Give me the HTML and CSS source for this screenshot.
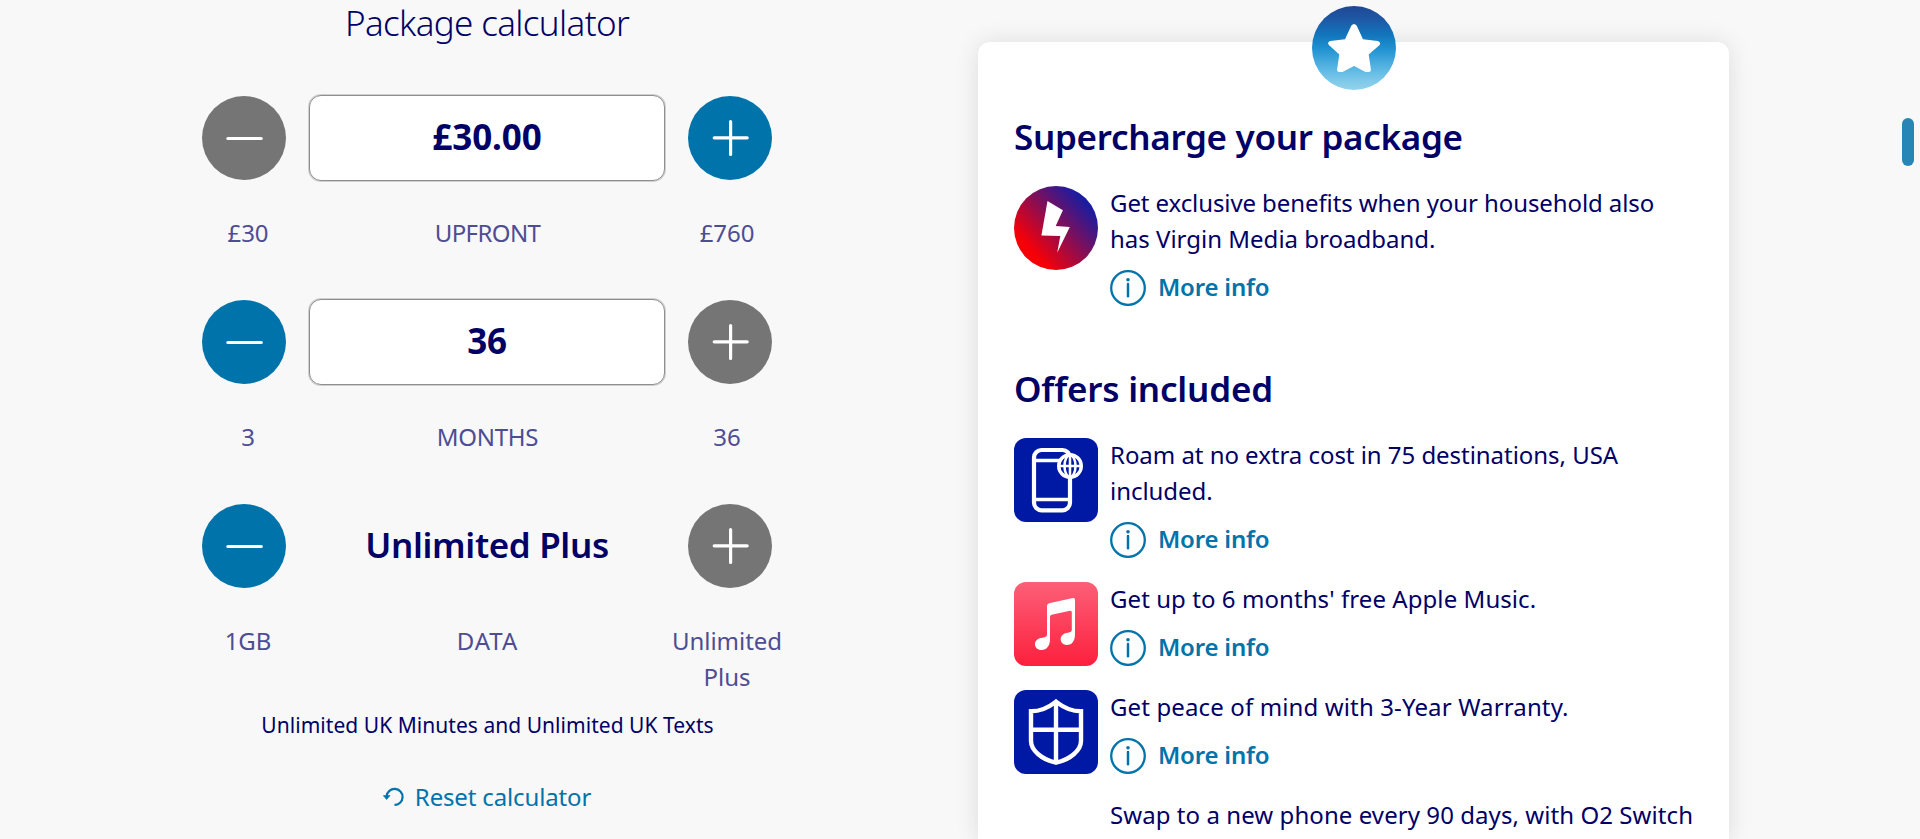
FILE: index.html
```
<!DOCTYPE html>
<html lang="en">
<head>
<meta charset="utf-8">
<title>Package calculator</title>
<link rel="stylesheet" href="styles.css">
</head>
<body>
<svg class="defs" width="0" height="0" aria-hidden="true">
  <symbol id="minus" viewBox="0 0 84 84"><path d="M25.8 42.5h33.500" fill="none" stroke="#fff" stroke-width="3" stroke-linecap="round"/></symbol>
  <symbol id="plus" viewBox="0 0 84 84"><path d="M42.6 25.5v33M26.2 41.8h33" fill="none" stroke="#fff" stroke-width="3.2" stroke-linecap="round"/></symbol>
  <symbol id="info" viewBox="0 0 36 36"><circle cx="18" cy="18" r="16.8" fill="none" stroke="#0073ab" stroke-width="2.3"/><circle cx="18" cy="9.8" r="1.8" fill="#0073ab"/><path d="M18 14v12.2" fill="none" stroke="#0073ab" stroke-width="2.5" stroke-linecap="round"/></symbol>
</svg>
<main class="page">
  <section class="calculator">
    <h1 class="calc-title">Package calculator</h1>

    <div class="control">
      <button class="round off" aria-label="Less upfront"><svg><use href="#minus"/></svg></button>
      <div class="value field money">£30.00</div>
      <button class="round" aria-label="More upfront"><svg><use href="#plus"/></svg></button>
    </div>
    <div class="labels"><span>£30</span><span class="caps">UPFRONT</span><span>£760</span></div>

    <div class="control">
      <button class="round" aria-label="Fewer months"><svg><use href="#minus"/></svg></button>
      <div class="value field">36</div>
      <button class="round off" aria-label="More months"><svg><use href="#plus"/></svg></button>
    </div>
    <div class="labels"><span>3</span><span class="caps months">MONTHS</span><span>36</span></div>

    <div class="control">
      <button class="round" aria-label="Less data"><svg><use href="#minus"/></svg></button>
      <div class="value plan">Unlimited Plus</div>
      <button class="round off" aria-label="More data"><svg><use href="#plus"/></svg></button>
    </div>
    <div class="labels last"><span>1GB</span><span class="caps data">DATA</span><span>Unlimited Plus</span></div>

    <p class="allowance">Unlimited UK Minutes and Unlimited UK Texts</p>
    <a class="reset">
      <svg class="reset-icon" viewBox="0 0 21 20"><path d="M3.6 9.2a8 8 0 1 1 7.9 8.7" fill="none" stroke="#0073ab" stroke-width="2.2"/><path d="M.3 8.6h6.800L3.6 12.600z" fill="#0073ab" stroke="#0073ab" stroke-width=".6" stroke-linejoin="round"/></svg>
      <span>Reset calculator</span>
    </a>
  </section>

  <section class="card">
    <svg class="star" viewBox="0 0 84 84">
      <defs><linearGradient id="sky" x1="0" y1="0" x2="0" y2="1"><stop offset="0" stop-color="#1f4795"/><stop offset=".18" stop-color="#1c5ba8"/><stop offset=".35" stop-color="#1277bd"/><stop offset=".5" stop-color="#1e90d0"/><stop offset=".7" stop-color="#4fb0e0"/><stop offset=".88" stop-color="#7cc8e9"/><stop offset="1" stop-color="#93d2ec"/></linearGradient></defs>
      <circle cx="42" cy="42" r="42" fill="url(#sky)"/>
      <path d="M39.4 19.6Q42 16.400 44.600 19.600L51 33.200L65.600 34.900Q69.400 36.200 67.600 39L56.700 48.500L58.900 63.500Q59 66.300 56 66L53.5 66L42 60L30.5 66L28 66Q25 66.300 25.100 63.500L27.300 48.500L16.900 39Q14.600 36.200 18.400 34.900L33 33.200Z" fill="#fff"/>
    </svg>

    <h2 class="card-title">Supercharge your package</h2>
    <div class="offer">
      <svg class="offer-icon" viewBox="0 0 84 84">
        <defs><linearGradient id="volt" x1=".2" y1=".8" x2=".86" y2=".2"><stop offset=".04" stop-color="#f50008"/><stop offset="1" stop-color="#1a1ca0"/></linearGradient></defs>
        <circle cx="42" cy="42" r="42" fill="url(#volt)"/>
        <path d="M33.500 15L48.900 24.300L41.700 40L55.800 41L43.200 66.800L46.300 50L27.400 49.500Z" fill="#fff"/>
      </svg>
      <div class="offer-body">
        <p class="lead">Get exclusive benefits when your household also<br><span class="close">has Virgin Media broadband.</span></p>
        <a class="more"><svg><use href="#info"/></svg><span>More info</span></a>
      </div>
    </div>

    <h2 class="card-title second">Offers included</h2>
    <div class="offer">
      <svg class="offer-icon" viewBox="0 0 84 84">
        <rect width="84" height="84" rx="12" fill="#0019a5"/>
        <g fill="none" stroke="#fff">
          <rect x="20" y="12" width="36" height="60.300" rx="7.500" stroke-width="4.200"/>
          <path d="M20 22.500h36M20 61.500h36" stroke-width="3.400"/>
        </g>
        <circle cx="56" cy="28" r="11.300" fill="#0019a5" stroke="#fff" stroke-width="3.400"/>
        <g fill="none" stroke="#fff" stroke-width="2.500"><path d="M56 17v22M45 28h22"/><ellipse cx="56" cy="28" rx="5.500" ry="11"/></g>
      </svg>
      <div class="offer-body">
        <p>Roam at no extra cost in 75 destinations, USA<br>included.</p>
        <a class="more"><svg><use href="#info"/></svg><span>More info</span></a>
      </div>
    </div>
    <div class="offer">
      <svg class="offer-icon" viewBox="0 0 84 84">
        <defs><linearGradient id="rose" x1="0" y1="0" x2="0" y2="1"><stop offset="0" stop-color="#fd5f78"/><stop offset="1" stop-color="#fc203d"/></linearGradient></defs>
        <rect width="84" height="84" rx="12" fill="url(#rose)"/>
        <path d="M33 24Q33 21.800 35 21.200L59 16Q61 15.700 61 17.800V52.500C61 58 58.600 63 52.800 63C49.300 63 46.700 60.500 46.700 57.300C46.700 54 49 51.800 52.400 51C56 50.200 57.800 50 57.800 47.500V30.200Q57.800 28.400 56 28.700L37.600 32.700Q36 33.100 36 34.800V57.500C36 63 33.200 68.100 27.300 68.100C23.700 68.100 21 65.600 21 62.300C21 59 23.400 56.900 26.800 56.100C30.500 55.200 33 55.200 33 52.500Z" fill="#fff"/>
      </svg>
      <div class="offer-body">
        <p class="loose">Get up to 6 months' free Apple Music.</p>
        <a class="more"><svg><use href="#info"/></svg><span>More info</span></a>
      </div>
    </div>
    <div class="offer">
      <svg class="offer-icon" viewBox="0 0 84 84">
        <rect width="84" height="84" rx="12" fill="#0019a5"/>
        <path d="M42 11.600C35 17.200 26.500 21.300 17 21.300V51C17 60.500 28 69.500 42 72.700C56 69.500 67 60.500 67 51V21.300C57.500 21.300 49 17.200 42 11.600ZM42 12V72M17 39.700H67" fill="none" stroke="#fff" stroke-width="4.400"/>
      </svg>
      <div class="offer-body">
        <p class="looser">Get peace of mind with 3-Year Warranty.</p>
        <a class="more"><svg><use href="#info"/></svg><span>More info</span></a>
      </div>
    </div>
    <div class="offer">
      <div class="offer-icon"></div>
      <div class="offer-body"><p class="loose">Swap to a new phone every 90 days, with O2 Switch</p></div>
    </div>
  </section>
</main>
<div class="scroll-thumb"></div>
</body>
</html>
```

FILE: styles.css
```
* { box-sizing: border-box; }

body {
  margin: 0;
  height: 839px;
  overflow: hidden;
  background: #f8f8f8;
  color: #000066;
  font: 24px/36px "Noto Sans", "Open Sans", sans-serif;
}

h1, h2, p { margin: 0; }

.defs { display: block; }

.page {
  display: flex;
  align-items: flex-start;
  height: 839px;
  overflow: hidden;
}

.calculator {
  width: 600px;
  margin-left: 187px;
}

.calc-title {
  height: 94px;
  font-size: 35px;
  font-weight: 300;
  line-height: 46px;
  letter-spacing: -0.65px;
  text-align: center;
}

.control {
  display: flex;
  align-items: center;
  justify-content: space-between;
  height: 88px;
  padding: 0 15px;
}

.round {
  width: 84px;
  height: 84px;
  padding: 0;
  border: 0;
  border-radius: 50%;
  background: #0073ab;
}

.round.off { background: #757575; }

.round svg {
  display: block;
  width: 84px;
  height: 84px;
}

.value {
  width: 356px;
  height: 86px;
  border: 1px solid transparent;
  font-size: 35px;
  font-weight: 600;
  line-height: 82px;
  letter-spacing: -0.35px;
  text-align: center;
}

.field {
  border-color: #8f8f8f;
  border-radius: 12px;
  background: #fff;
  box-shadow: 0 0 0 1px rgba(0, 0, 0, 0.16);
  font-weight: 700;
}

.money { letter-spacing: -0.1px; }

.labels {
  display: grid;
  grid-template-columns: 120px 1fr 120px;
  height: 83px;
  margin-top: 33px;
  padding-left: 1px;
  color: #4d4d94;
  letter-spacing: -0.05px;
  text-align: center;
}

.labels.last { height: 86px; }

.caps { letter-spacing: -0.6px; }

.caps.months { letter-spacing: -0.3px; }

.caps.data { letter-spacing: 1px; }

.allowance {
  padding-left: 1px;
  font-size: 21px;
  line-height: 32px;
  text-align: center;
  letter-spacing: 0.04px;
}

.reset {
  display: flex;
  justify-content: center;
  align-items: center;
  gap: 11px;
  margin-top: 38px;
  color: #0073ab;
  letter-spacing: -0.15px;
}

.reset-icon {
  width: 21px;
  height: 20px;
}

.card {
  position: relative;
  width: 751px;
  height: 797px;
  margin: 42px 0 0 191px;
  padding: 69px 0 0 36px;
  border-radius: 12px 12px 0 0;
  background: #fff;
  box-shadow: 0 0 24px rgba(0, 0, 0, 0.11), 0 24px 24px rgba(0, 0, 0, 0.02);
}

.star {
  position: absolute;
  top: -36px;
  left: 334px;
  width: 84px;
  height: 84px;
}

.card-title {
  height: 75px;
  font-size: 35px;
  font-weight: 600;
  line-height: 52px;
  letter-spacing: -0.3px;
}

.card-title.second {
  margin-top: 57px;
  letter-spacing: -0.2px;
}

.offer {
  display: flex;
  gap: 12px;
  margin-bottom: 24px;
}

.offer-icon {
  flex: none;
  width: 84px;
  height: 84px;
}

.offer-body {
  margin-top: -1px;
  white-space: nowrap;
}

.offer-body p { letter-spacing: -0.04px; }

.offer-body .lead { letter-spacing: -0.09px; }

.offer-body .close { letter-spacing: 0; }

.offer-body .loose { letter-spacing: 0.07px; }

.offer-body .looser { letter-spacing: 0.13px; }

.more {
  display: flex;
  gap: 12px;
  margin-top: 12px;
  color: #0073ab;
  font-weight: 600;
  letter-spacing: -0.2px;
}

.more svg {
  width: 36px;
  height: 36px;
  margin-top: 1px;
}

.scroll-thumb {
  position: absolute;
  top: 118px;
  right: 6px;
  width: 12px;
  height: 48px;
  border-radius: 6px;
  background: #2786b5;
}
```
